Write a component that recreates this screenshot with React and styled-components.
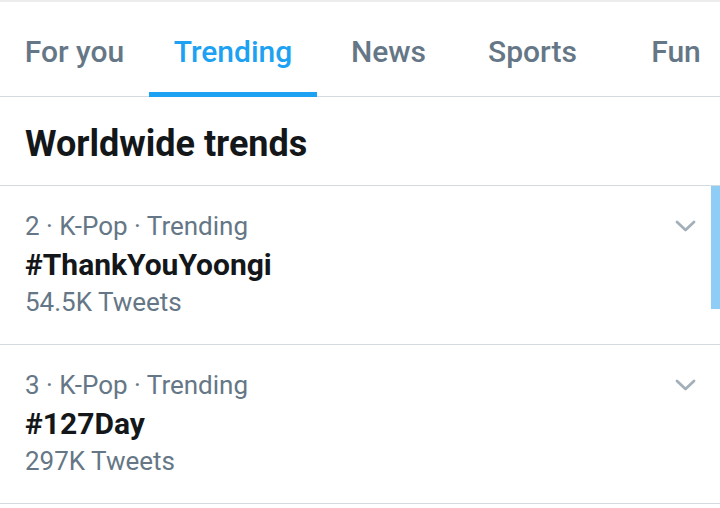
import React from 'react';
import styled, { createGlobalStyle } from 'styled-components';

const GlobalStyle = createGlobalStyle`
  body {
    margin: 0;
    background: #ffffff;
    font-family: Roboto, "Noto Sans", Arial, sans-serif;
  }
`;

const Page = styled.div`
  width: 720px;
  height: 508px;
  overflow: hidden;
  background: #ffffff;
`;

const TopStrip = styled.div`
  height: 2px;
  background: #ececec;
`;

const TabBar = styled.div`
  display: flex;
  height: 95px;
  overflow: hidden;
  box-shadow: inset 0 -1px 0 #d3dbe0;
`;

const Tab = styled.div`
  flex: 0 0 ${p => p.$width}px;
  box-sizing: border-box;
  height: 95px;
  padding-top: 32px;
  text-align: center;
  font-size: 30px;
  line-height: 36px;
  font-weight: 500;
  color: ${p => (p.$active ? '#1da1f2' : '#657786')};
  border-bottom: 5px solid ${p => (p.$active ? '#1da1f2' : 'transparent')};
  white-space: nowrap;
`;

const Heading = styled.h2`
  margin: 0;
  height: 89px;
  box-sizing: border-box;
  padding: 27px 25px 0;
  font-size: 36px;
  line-height: 40px;
  font-weight: 700;
  color: #14171a;
  border-bottom: 1px solid #d3dbe0;
`;

const List = styled.div`
  position: relative;
`;

const Row = styled.div`
  display: flex;
  justify-content: space-between;
  height: 159px;
  box-sizing: border-box;
  padding: 24px 24px 0 25px;
  border-bottom: 1px solid #d3dbe0;
`;

const Info = styled.div`
  display: flex;
  flex-direction: column;
`;

const Meta = styled.div`
  font-size: 26px;
  line-height: 32px;
  color: #657786;
`;

const Title = styled.div`
  margin-top: 4px;
  font-size: 30px;
  line-height: 38px;
  font-weight: 700;
  color: #14171a;
`;

const Count = styled.div`
  font-size: 26px;
  line-height: 36px;
  color: #657786;
`;

const Chevron = styled.svg`
  margin-top: 10px;
  width: 21px;
  height: 12px;
`;

const ScrollThumb = styled.div`
  position: absolute;
  top: 0;
  right: 0;
  width: 9px;
  height: 123px;
  background: #8ecdf5;
`;

const tabs = [
  { label: 'For you', width: 149 },
  { label: 'Trending', width: 168, active: true },
  { label: 'News', width: 143 },
  { label: 'Sports', width: 145 },
  { label: 'Fun', width: 142 },
];

const trends = [
  { meta: '2 · K-Pop · Trending', title: '#ThankYouYoongi', count: '54.5K Tweets' },
  { meta: '3 · K-Pop · Trending', title: '#127Day', count: '297K Tweets' },
];

export default function App() {
  return (
    <Page>
      <GlobalStyle />
      <TopStrip />
      <TabBar>
        {tabs.map(t => (
          <Tab key={t.label} $width={t.width} $active={t.active}>
            {t.label}
          </Tab>
        ))}
      </TabBar>
      <Heading>Worldwide trends</Heading>
      <List>
        {trends.map(t => (
          <Row key={t.title}>
            <Info>
              <Meta>{t.meta}</Meta>
              <Title>{t.title}</Title>
              <Count>{t.count}</Count>
            </Info>
            <Chevron viewBox="0 0 21 12">
              <path d="M2 2 L10.5 10 L19 2" fill="none" stroke="#a3b0b9" strokeWidth="2.8" strokeLinecap="round" strokeLinejoin="round" />
            </Chevron>
          </Row>
        ))}
        <ScrollThumb />
      </List>
    </Page>
  );
}
